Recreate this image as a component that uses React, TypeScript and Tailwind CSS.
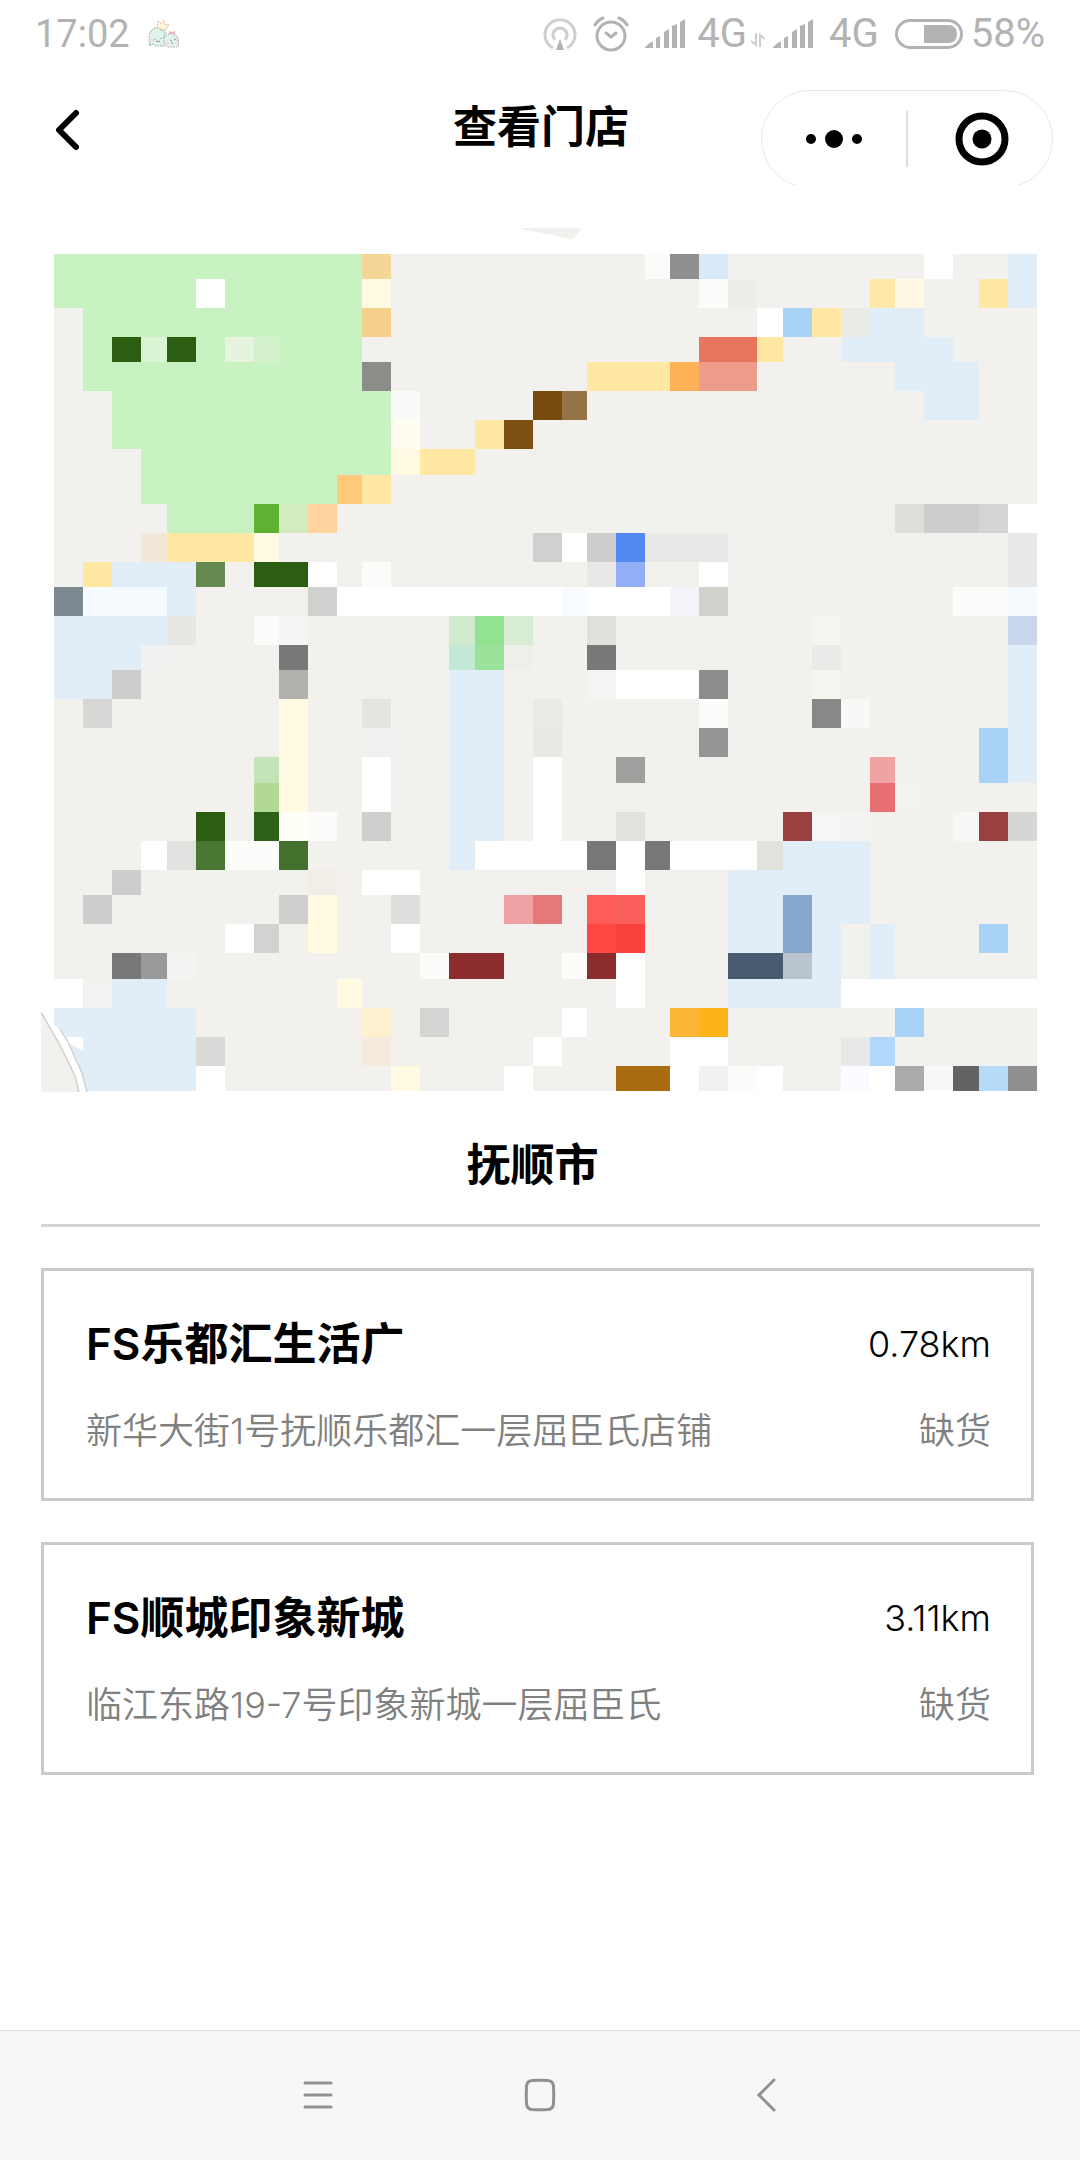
type Tile = [col: number, row: number, cols: number, rows: number, color: string]

const stores = [
  { name: 'FS乐都汇生活广', distance: '0.78km', address: '新华大街1号抚顺乐都汇一层屈臣氏店铺', stock: '缺货' },
  { name: 'FS顺城印象新城', distance: '3.11km', address: '临江东路19-7号印象新城一层屈臣氏', stock: '缺货' },
]

// tile edges inside the map drawing, 35 columns and 30 rows
const colEdges = [
  13, 42, 71, 100, 126, 155, 184, 213, 238, 267, 296, 321, 350, 379, 408, 434, 463, 492,
  521, 546, 575, 604, 629, 658, 687, 716, 742, 771, 800, 829, 854, 883, 912, 938, 967, 996,
]
const rowEdges = [
  26, 51, 80, 109, 134, 163, 192, 221, 247, 276, 305, 334, 359, 388, 417, 442,
  471, 500, 529, 555, 584, 613, 642, 667, 696, 725, 751, 780, 809, 838, 863,
]

const park = '#c8f2c2'
const water = '#e1eef8'
const road = '#ffe7a4'
const lane = '#fffae1'
const white = '#ffffff'
const pale = '#fbfbfa'
const forest = '#2b5e11'
const gray = '#cdcdcd'
const dark = '#787878'
const sky = '#a8d3f7'
const wine = '#8d2c2d'

const tiles: Tile[] = [
  // park
  [0, 0, 11, 2, park], [1, 2, 10, 3, park], [2, 5, 10, 2, park], [3, 7, 9, 1, park], [3, 8, 7, 1, park], [4, 9, 3, 1, park],
  [5, 1, 1, 1, white], [2, 3, 1, 1, forest], [3, 3, 1, 1, '#d9f5d4'], [4, 3, 1, 1, forest], [6, 3, 1, 1, '#e5f3df'], [7, 3, 1, 1, '#d3f2cc'],
  [11, 0, 1, 1, '#f6d698'], [11, 1, 1, 1, lane], [11, 2, 1, 1, '#f4d08a'], [11, 4, 1, 1, '#8b8d89'],
  // north
  [21, 0, 1, 1, pale], [22, 0, 1, 1, '#8f8f8f'], [23, 0, 1, 1, '#d8eafa'], [31, 0, 1, 1, white], [34, 0, 1, 2, water],
  [23, 1, 1, 1, pale], [24, 1, 1, 1, '#eeede9'], [29, 1, 1, 1, '#ffe8aa'], [30, 1, 1, 1, '#fff8e4'], [33, 1, 1, 1, road],
  [25, 2, 1, 1, white], [26, 2, 1, 1, sky], [27, 2, 1, 1, road], [28, 2, 1, 1, '#ebece7'], [29, 2, 2, 1, water],
  [23, 3, 2, 1, '#e8765e'], [25, 3, 1, 1, road], [28, 3, 4, 1, water], [30, 4, 3, 1, water], [31, 5, 2, 1, water],
  [19, 4, 3, 1, road], [22, 4, 1, 1, '#ffb158'], [23, 4, 2, 1, '#ed9c8b'],
  [12, 5, 1, 1, '#fafaf8'], [17, 5, 1, 1, '#784a0d'], [18, 5, 1, 1, '#947346'],
  [12, 6, 1, 1, '#fffdf0'], [15, 6, 1, 1, road], [16, 6, 1, 1, '#7d4f12'], [12, 7, 1, 1, lane], [13, 7, 2, 1, road],
  [10, 8, 1, 1, '#ffc97c'], [11, 8, 1, 1, road], [7, 9, 1, 1, '#5fb132'], [8, 9, 1, 1, '#d4eac0'], [9, 9, 1, 1, '#ffd49e'],
  [30, 9, 1, 1, '#dfdedb'], [31, 9, 2, 1, gray], [33, 9, 1, 1, '#d4d4d4'], [34, 9, 1, 1, white],
  // middle
  [3, 10, 1, 1, '#f3e7d7'], [4, 10, 3, 1, road], [7, 10, 1, 1, lane], [17, 10, 1, 1, '#d0d0d0'], [18, 10, 1, 1, white],
  [19, 10, 1, 1, gray], [20, 10, 1, 1, '#5389f0'], [21, 10, 3, 1, '#e8e8e8'], [34, 10, 1, 2, '#e8e8e8'],
  [1, 11, 1, 1, road], [2, 11, 3, 1, water], [5, 11, 1, 1, '#648a52'], [7, 11, 2, 1, forest], [9, 11, 1, 1, white], [11, 11, 1, 1, pale],
  [19, 11, 1, 1, '#e8e8e8'], [20, 11, 1, 1, '#92aef7'], [23, 11, 1, 1, white],
  [0, 12, 1, 1, '#7c8991'], [1, 12, 3, 1, '#f5fafe'], [4, 12, 1, 1, water], [9, 12, 1, 1, '#d0d0ce'], [10, 12, 8, 1, white],
  [18, 12, 1, 1, '#f8fbff'], [19, 12, 3, 1, white], [22, 12, 1, 1, '#f4f5fb'], [23, 12, 1, 1, '#d1d2cc'], [32, 12, 2, 1, '#fcfcfa'], [34, 12, 1, 1, '#f5fafe'],
  [0, 13, 4, 1, water], [4, 13, 1, 1, '#e8e7e3'], [7, 13, 1, 1, pale], [8, 13, 1, 1, '#f6f5f4'], [14, 13, 1, 1, '#d1e9cc'],
  [15, 13, 1, 1, '#92e292'], [16, 13, 1, 1, '#d9ecd6'], [19, 13, 1, 1, '#dfe0dc'], [27, 13, 1, 1, '#f5f4f0'], [34, 13, 1, 1, '#c9d6ee'],
  [0, 14, 3, 1, water], [3, 14, 1, 1, '#f1f1f2'], [8, 14, 1, 1, dark], [14, 14, 1, 1, '#c3e8d6'], [15, 14, 1, 1, '#9be39b'],
  [16, 14, 1, 1, '#edefe8'], [19, 14, 1, 1, dark], [27, 14, 1, 1, '#ebeae9'], [34, 14, 1, 5, water],
  [0, 15, 2, 1, water], [2, 15, 1, 1, gray], [8, 15, 1, 1, '#b2b1ad'], [14, 15, 2, 6, water], [14, 21, 1, 1, water],
  [19, 15, 1, 1, '#f4f4f4'], [20, 15, 3, 1, white], [23, 15, 1, 1, '#8c8c8c'], [27, 15, 1, 1, '#f4f5ef'],
  [1, 16, 1, 1, '#d7d7d5'], [8, 16, 1, 4, lane], [11, 16, 1, 1, '#e5e4e0'], [17, 16, 1, 1, '#ebeae6'], [23, 16, 1, 1, '#fcfcfa'],
  [27, 16, 1, 1, '#888888'], [28, 16, 1, 1, '#f8f8f6'],
  [11, 17, 1, 1, '#f0f0f0'], [17, 17, 1, 1, '#e8e8e5'], [23, 17, 1, 1, '#969696'], [33, 17, 1, 2, sky],
  [7, 18, 1, 1, '#c3e3b9'], [11, 18, 1, 2, white], [17, 18, 1, 3, white], [20, 18, 1, 1, '#a0a09e'], [29, 18, 1, 1, '#efa3a3'],
  [7, 19, 1, 1, '#b2d896'], [29, 19, 1, 1, '#e76f72'], [30, 19, 1, 1, '#f1f3ed'],
  // south
  [5, 20, 1, 1, forest], [7, 20, 1, 1, '#2e6118'], [8, 20, 1, 1, '#fffff7'], [9, 20, 1, 1, '#fcfcfa'], [11, 20, 1, 1, '#cfcfcd'],
  [20, 20, 1, 1, '#e1e2de'], [26, 20, 1, 1, '#994141'], [27, 20, 1, 1, '#f7f6f4'], [28, 20, 1, 1, '#f4f3f1'], [32, 20, 1, 1, '#f8f7f5'],
  [33, 20, 1, 1, '#994141'], [34, 20, 1, 1, '#d6d6d4'],
  [3, 21, 1, 1, white], [4, 21, 1, 1, '#e1e1df'], [5, 21, 1, 1, '#4a7733'], [6, 21, 2, 1, '#fcfcfa'], [8, 21, 1, 1, '#44702d'],
  [15, 21, 4, 1, white], [19, 21, 1, 1, dark], [20, 21, 1, 2, white], [21, 21, 1, 1, dark], [22, 21, 3, 1, white], [25, 21, 1, 1, '#e1e1de'],
  [26, 21, 3, 1, water], [24, 22, 5, 2, water], [24, 24, 4, 3, water], [29, 24, 1, 2, water],
  [2, 22, 1, 1, gray], [9, 22, 1, 1, '#f2eee7'], [11, 22, 2, 1, white],
  [1, 23, 1, 1, gray], [8, 23, 1, 1, '#cfcfcd'], [9, 23, 1, 2, lane], [12, 23, 1, 1, '#dededc'], [16, 23, 1, 1, '#eea2a3'],
  [17, 23, 1, 1, '#e77879'], [19, 23, 1, 1, '#fd5c58'], [20, 23, 1, 1, '#fa5f5b'], [26, 23, 1, 2, '#85a7cd'],
  [6, 24, 1, 1, white], [7, 24, 1, 1, '#d2d2d0'], [12, 24, 1, 1, white], [19, 24, 1, 1, '#ff4743'], [20, 24, 1, 1, '#fb413e'], [33, 24, 1, 1, sky],
  [2, 25, 1, 1, dark], [3, 25, 1, 1, '#9a9a9a'], [4, 25, 1, 1, '#f3f3f1'], [13, 25, 1, 1, pale], [14, 25, 2, 1, wine], [18, 25, 1, 1, '#fcfcfa'],
  [19, 25, 1, 1, wine], [20, 25, 1, 2, white], [24, 25, 2, 1, '#475c70'], [26, 25, 1, 1, '#bac4cd'],
  [0, 26, 1, 1, white], [1, 26, 1, 1, '#f2f2f1'], [2, 26, 2, 1, water], [10, 26, 1, 1, lane], [28, 26, 7, 1, white],
  [0, 27, 5, 3, water], [11, 27, 1, 1, '#fdf1d0'], [13, 27, 1, 1, '#d4d4d2'], [18, 27, 1, 1, white], [22, 27, 1, 1, '#fcb635'],
  [23, 27, 1, 1, '#ffb31b'], [30, 27, 1, 1, sky],
  [5, 28, 1, 1, '#d9d9d7'], [11, 28, 1, 1, '#f4ebde'], [17, 28, 1, 1, white], [22, 28, 2, 1, white], [28, 28, 1, 1, '#e8e8e8'], [29, 28, 1, 1, '#b1d7fb'],
  [5, 29, 1, 1, white], [12, 29, 1, 1, lane], [16, 29, 1, 1, white], [20, 29, 2, 1, '#a96c10'], [22, 29, 1, 1, white], [23, 29, 1, 1, '#f2f1ef'],
  [24, 29, 1, 1, '#fcfcfa'], [25, 29, 1, 1, white], [28, 29, 1, 1, '#fafcff'], [29, 29, 1, 1, '#fffffd'], [30, 29, 1, 1, '#ababab'],
  [31, 29, 1, 1, '#f8f8f8'], [32, 29, 1, 1, '#636363'], [33, 29, 1, 1, '#b7daf9'], [34, 29, 1, 1, '#8f8f8f'],
]

function StoreMap() {
  return (
    <svg viewBox="0 0 999 864" className="block w-full h-auto" role="img" aria-label="门店地图">
      <path d="M478 0h63l-9 11-8-1-12-3-28-5z" fill="#f2f1ed" />
      <g shapeRendering="crispEdges">
        <rect x="13" y="26" width="983" height="837" fill="#f2f1ed" />
        {tiles.map(([col, row, cols, rows, color]) => (
          <rect
            key={`${col}-${row}`}
            x={colEdges[col]}
            y={rowEdges[row]}
            width={colEdges[col + cols] - colEdges[col]}
            height={rowEdges[row + rows] - rowEdges[row]}
            fill={color}
          />
        ))}
      </g>
      {/* road across the corner */}
      <path d="M0 782l13 15 7 5 6 7h16v14l-14-8 13 30 5 19H0z" fill="#ffffff" />
      <path d="M0 784l20 35 14 29 4 16H0z" fill="#f2f1ed" />
      <path d="M0 784l20 35 14 29 4 16M19 801l7 11 15 33 5 19" fill="none" stroke="#d0d0ce" strokeWidth="1.5" />
    </svg>
  )
}

function StickerIcon() {
  return (
    <svg viewBox="0 0 32 28" className="w-8 h-7">
      <path d="M1 26V14q2-7 7-7h8l3 6q9-3 12 5v6l-1 2q-7 1-12 0-8 1-14-1z" fill="#dff3ee" />
      <path d="M2 26l-1-8q0-7 6-10l3-1 2 3q4 0 5 3-2 5-1 10 1 3 4 4h9l2-1-1-2q2-7-5-10-7-1-9 4M2 25l3-1 3 2h8" fill="none" stroke="#a89c9c" strokeWidth="1" strokeDasharray="1.5 1.2" />
      <path d="M9 8l1-7 3 3 3-4 1 5 4-1-3 6z" fill="#fff6e0" stroke="#dcb98c" strokeWidth="1" strokeDasharray="1.5 1" />
      <path d="M21 11l3 1 3-1v3l-3-1-3 1z" fill="#f6a8c2" />
      <path d="M7 19v1m6-2v1m-5 2q2 1 4 0M22 20l2 1m4-2l-2 1m-3 3h2" fill="none" stroke="#a28b8b" strokeWidth="1" />
      <path d="M3 19h3v2H3zM15 21h2v2h-2zM19 22h2v2h-2zM28 19h2v2h-2z" fill="#f8cfcf" />
    </svg>
  )
}

function HotspotIcon() {
  return (
    <svg viewBox="0 0 34 34" className="w-[34px] h-[34px]" fill="none" stroke="#cfcfcf" strokeWidth="3">
      <path d="M10 31A15 15 0 1 1 24 31" />
      <path d="M12 23A7 7 0 1 1 22 23" />
      <path d="M17 22l4 11h-8z" fill="#b3b3b3" stroke="none" />
    </svg>
  )
}

function AlarmIcon() {
  return (
    <svg viewBox="0 0 36 36" className="w-9 h-9" fill="none" stroke="#b3b3b3" strokeWidth="3" strokeLinecap="round" strokeLinejoin="round">
      <circle cx="18" cy="20" r="14" />
      <path d="M13 17l5 4 5-4M2 9q3-5 8-7M26 2q5 2 8 7" />
    </svg>
  )
}

function SignalIcon() {
  return (
    <svg viewBox="0 0 40 30" className="w-10 h-[30px]" fill="#b3b3b3">
      <path d="M0 29v-1l6-5h2v6zM11 29V19l4-2v12zM19 29V13l5-3v19zM27 29V7l5-2v24zM35 29V3l5-3v29z" />
    </svg>
  )
}

function BatteryIcon() {
  return (
    <svg viewBox="0 0 68 30" className="w-[68px] h-[30px]">
      <rect x="1.5" y="1.5" width="65" height="27" rx="13.5" fill="none" stroke="#b3b3b3" strokeWidth="3" />
      <path d="M30 6h23q9 0 9 9t-9 9H30q-1 0-1-1V7q0-1 1-1z" fill="#b3b3b3" />
    </svg>
  )
}

function StatusBar() {
  return (
    <div className="flex h-[68px] items-center justify-between px-[35px] font-['Roboto',sans-serif] leading-[68px] text-[#b3b3b3]">
      <div className="flex items-center gap-[18px] text-[38px]">
        <span>17:02</span>
        <StickerIcon />
      </div>
      <div className="flex items-center text-[40px]">
        <HotspotIcon />
        <span className="ml-4"><AlarmIcon /></span>
        <span className="ml-4 mr-3"><SignalIcon /></span>
        <span>4G</span>
        <svg viewBox="0 0 14 14" className="ml-1 mr-2 mt-3 h-3.5 w-3.5" fill="none" stroke="#cccccc" strokeWidth="2">
          <path d="M5 0v12L0 8M9 14V2l5 4" />
        </svg>
        <SignalIcon />
        <span className="ml-4 mr-4">4G</span>
        <BatteryIcon />
        <span className="ml-2">58%</span>
      </div>
    </div>
  )
}

function Header() {
  return (
    <header className="grid h-[117px] grid-cols-[1fr_auto_1fr] items-center overflow-hidden">
      <button type="button" aria-label="返回" className="ml-[54px] mt-1 w-7">
        <svg viewBox="0 0 28 42" className="block w-7 h-[42px]" fill="none" stroke="#000000" strokeWidth="6" strokeLinecap="round" strokeLinejoin="round">
          <path d="M22 4L5 21l17 17" />
        </svg>
      </button>
      <h1 className="pb-0.5 pl-0.5 text-[44px] font-bold leading-[64px]">查看门店</h1>
      <div className="mr-[27px] mt-[22px] flex h-[98px] w-[292px] items-center self-start justify-self-end rounded-full border border-[#e9e9e9]">
        <button type="button" aria-label="更多" className="flex h-full flex-1 items-center justify-center">
          <svg viewBox="0 0 58 20" className="w-[58px] h-5">
            <circle cx="6" cy="10" r="5" />
            <circle cx="29" cy="10" r="9" />
            <circle cx="52" cy="10" r="5" />
          </svg>
        </button>
        <span className="h-14 w-0.5 bg-[#dddddd]" />
        <button type="button" aria-label="关闭" className="flex h-full flex-1 items-center justify-center">
          <svg viewBox="0 0 54 54" className="ml-1 w-[54px] h-[54px]">
            <circle cx="27" cy="27" r="23" fill="none" stroke="#000000" strokeWidth="7" />
            <circle cx="27" cy="27" r="9.5" />
          </svg>
        </button>
      </div>
    </header>
  )
}

function NavBar() {
  return (
    <nav className="flex h-[130px] items-center justify-center border-t border-[#dfdfdf] bg-[#f7f7f7] pb-0.5">
      <button type="button" aria-label="菜单" className="flex w-56 justify-center">
        <svg viewBox="0 0 34 34" className="w-[34px] h-[34px]" stroke="#919191" strokeWidth="3" strokeLinecap="round">
          <path d="M6 5h26M6 17h26M6 29h26" />
        </svg>
      </button>
      <button type="button" aria-label="主页" className="flex w-56 justify-center">
        <svg viewBox="0 0 34 34" className="w-[34px] h-[34px]" fill="none" stroke="#919191" strokeWidth="3">
          <path d="M9 2.500Q17 2 25 2.500q5 .5 5.500 5.500.5 9 0 18-.5 5-5.500 5.500-8 .5-16 0-5-.5-5.500-5.500-.5-9 0-18Q4 3 9 2.500z" />
        </svg>
      </button>
      <button type="button" aria-label="后退" className="flex w-56 justify-center">
        <svg viewBox="0 0 34 34" className="w-[34px] h-[34px]" fill="none" stroke="#919191" strokeWidth="3" strokeLinecap="round">
          <path d="M27 2L12 17l15 15" />
        </svg>
      </button>
    </nav>
  )
}

export default function App() {
  return (
    <div className="flex min-h-screen flex-col bg-white font-['Inter','Noto_Sans_CJK_SC',sans-serif] text-black">
      <StatusBar />
      <Header />

      <main className="flex-1 pl-[41px] pr-10 pt-[43px]">
        <StoreMap />
        <h2 className="border-b-3 border-[#d5d5d5] pb-[27px] pr-4 pt-[41px] text-center text-[44px] font-bold leading-[64px]">抚顺市</h2>

        <ul className="mr-1.5 mt-[41px] flex flex-col gap-[41px]">
          {stores.map(store => (
            <li key={store.name} className="border-3 border-[#cacaca] pb-[43px] pl-[42px] pr-10 pt-[41px]">
              <div className="flex items-center justify-between">
                <h3 className="text-[44px] font-semibold leading-[64px]">{store.name}</h3>
                <span className="text-[36px] font-light leading-[48px]">{store.distance}</span>
              </div>
              <div className="mt-[31px] flex items-center justify-between text-[36px] font-[350] leading-[48px] text-[#808080]">
                <p>{store.address}</p>
                <span>{store.stock}</span>
              </div>
            </li>
          ))}
        </ul>
      </main>

      <NavBar />
    </div>
  )
}
